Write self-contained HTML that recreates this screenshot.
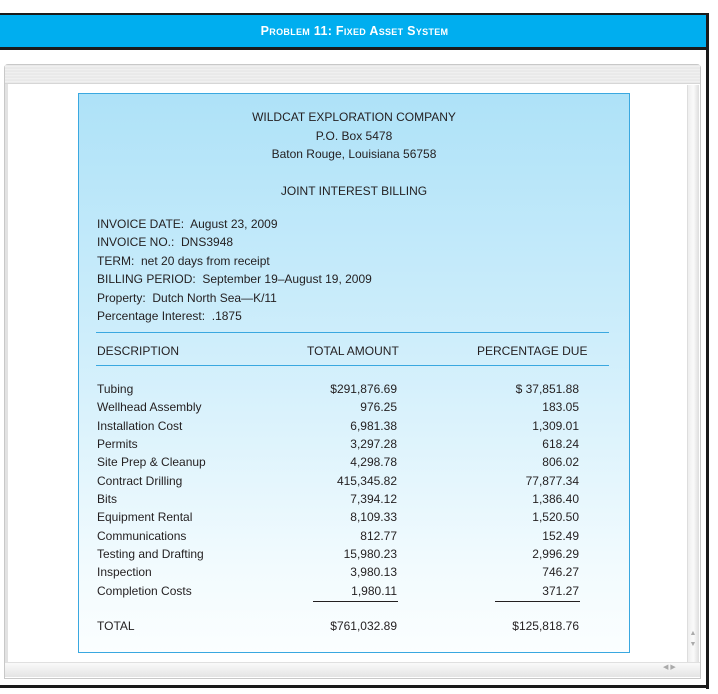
<!DOCTYPE html>
<html><head><style>
*{margin:0;padding:0;box-sizing:border-box}
body{width:718px;height:694px;background:#fff;position:relative;overflow:hidden;font-family:"Liberation Sans",Arial,sans-serif;color:#231f20}
.a{position:absolute;white-space:nowrap}
#hdr{left:0;top:13px;width:709px;height:37px;background:#00aeef;border-top:2px solid #1a1a1a;border-bottom:3px solid #1a1a1a;color:#fff;font-weight:bold;font-size:12.5px;text-align:center;line-height:32px;font-variant:small-caps;letter-spacing:.3px}
#rb{left:706px;top:13px;width:3px;height:676px;background:#1a1a1a}
#bb{left:0;top:685px;width:709px;height:3px;background:#1a1a1a}
#frame{left:4px;top:64px;width:697px;height:615px;border:1px solid #c8c8c8;border-radius:4px 4px 0 0;background:#fff}
#tbar{left:5px;top:65px;width:695px;height:19px;background:repeating-linear-gradient(#e6e6e6 0,#f4f4f4 2px,#e0e0e0 3px);border-bottom:1px solid #d6d6d6}
#vs{left:687px;top:85px;width:12px;height:577px;background:linear-gradient(90deg,#eee,#fafafa,#ddd);border-left:1px solid #ddd}
#hs{left:5px;top:662px;width:695px;height:15px;background:linear-gradient(#fafafa,#e4e4e4);border-top:1px solid #e0e0e0}
#lb{left:5px;top:84px;width:3px;height:580px;background:#e2e2e2}
#doc{left:78px;top:93px;width:552px;height:560px;border:1px solid #3aa8e0;background:linear-gradient(#aee2f8 0%,#cfeefb 45%,#f2fbfe 85%,#fbfeff 100%)}
.c{left:78px;width:552px;text-align:center;font-size:12px}
.t{font-size:12px}
.r{text-align:right;font-size:12px}
.hl{height:1px;background:#3aa8e0;left:96px;width:513px}
.ul{height:1px;background:#231f20}
</style></head><body>
<div class="a" id="hdr">Problem 11: Fixed Asset System</div>
<div class="a" id="rb"></div><div class="a" id="bb"></div>
<div class="a" id="frame"></div><div class="a" id="tbar"></div><div class="a" id="lb"></div>
<div class="a" id="vs"></div><div class="a" id="hs"></div>
<div class="a" style="left:687px;top:628px;width:12px;height:34px;color:#aaa;font-size:7px;text-align:center;line-height:11px">▲<br>▼</div>
<div class="a" style="left:663px;top:663px;color:#aaa;font-size:7px">◀ ▶</div>
<div class="a" id="doc"></div>
<div class="a c" style="top:110px">WILDCAT EXPLORATION COMPANY</div>
<div class="a c" style="top:129px">P.O. Box 5478</div>
<div class="a c" style="top:147px">Baton Rouge, Louisiana 56758</div>
<div class="a c" style="top:184px">JOINT INTEREST BILLING</div>
<div class="a t" style="left:97px;top:215px;line-height:18.4px">INVOICE DATE:&nbsp; August 23, 2009<br>INVOICE NO.:&nbsp; DNS3948<br>TERM:&nbsp; net 20 days from receipt<br>BILLING PERIOD:&nbsp; September 19–August 19, 2009<br>Property:&nbsp; Dutch North Sea—K/11<br>Percentage Interest:&nbsp; .1875</div>
<div class="a hl" style="top:332px"></div>
<div class="a t" style="left:97px;top:344px">DESCRIPTION</div>
<div class="a t" style="left:307px;top:344px">TOTAL AMOUNT</div>
<div class="a t" style="left:477px;top:344px">PERCENTAGE DUE</div>
<div class="a hl" style="top:365px"></div>
<div class="a t" style="left:97px;top:380px;line-height:18.35px">Tubing<br>Wellhead Assembly<br>Installation Cost<br>Permits<br>Site Prep &amp; Cleanup<br>Contract Drilling<br>Bits<br>Equipment Rental<br>Communications<br>Testing and Drafting<br>Inspection<br>Completion Costs</div>
<div class="a r" style="left:297px;width:100px;top:380px;line-height:18.35px">$291,876.69<br>976.25<br>6,981.38<br>3,297.28<br>4,298.78<br>415,345.82<br>7,394.12<br>8,109.33<br>812.77<br>15,980.23<br>3,980.13<br>1,980.11</div>
<div class="a r" style="left:479px;width:100px;top:380px;line-height:18.35px">$ 37,851.88<br>183.05<br>1,309.01<br>618.24<br>806.02<br>77,877.34<br>1,386.40<br>1,520.50<br>152.49<br>2,996.29<br>746.27<br>371.27</div>
<div class="a ul" style="left:313px;width:85px;top:601px"></div>
<div class="a ul" style="left:495px;width:85px;top:601px"></div>
<div class="a t" style="left:97px;top:619px">TOTAL</div>
<div class="a r" style="left:297px;width:100px;top:619px">$761,032.89</div>
<div class="a r" style="left:479px;width:100px;top:619px">$125,818.76</div>
</body></html>
